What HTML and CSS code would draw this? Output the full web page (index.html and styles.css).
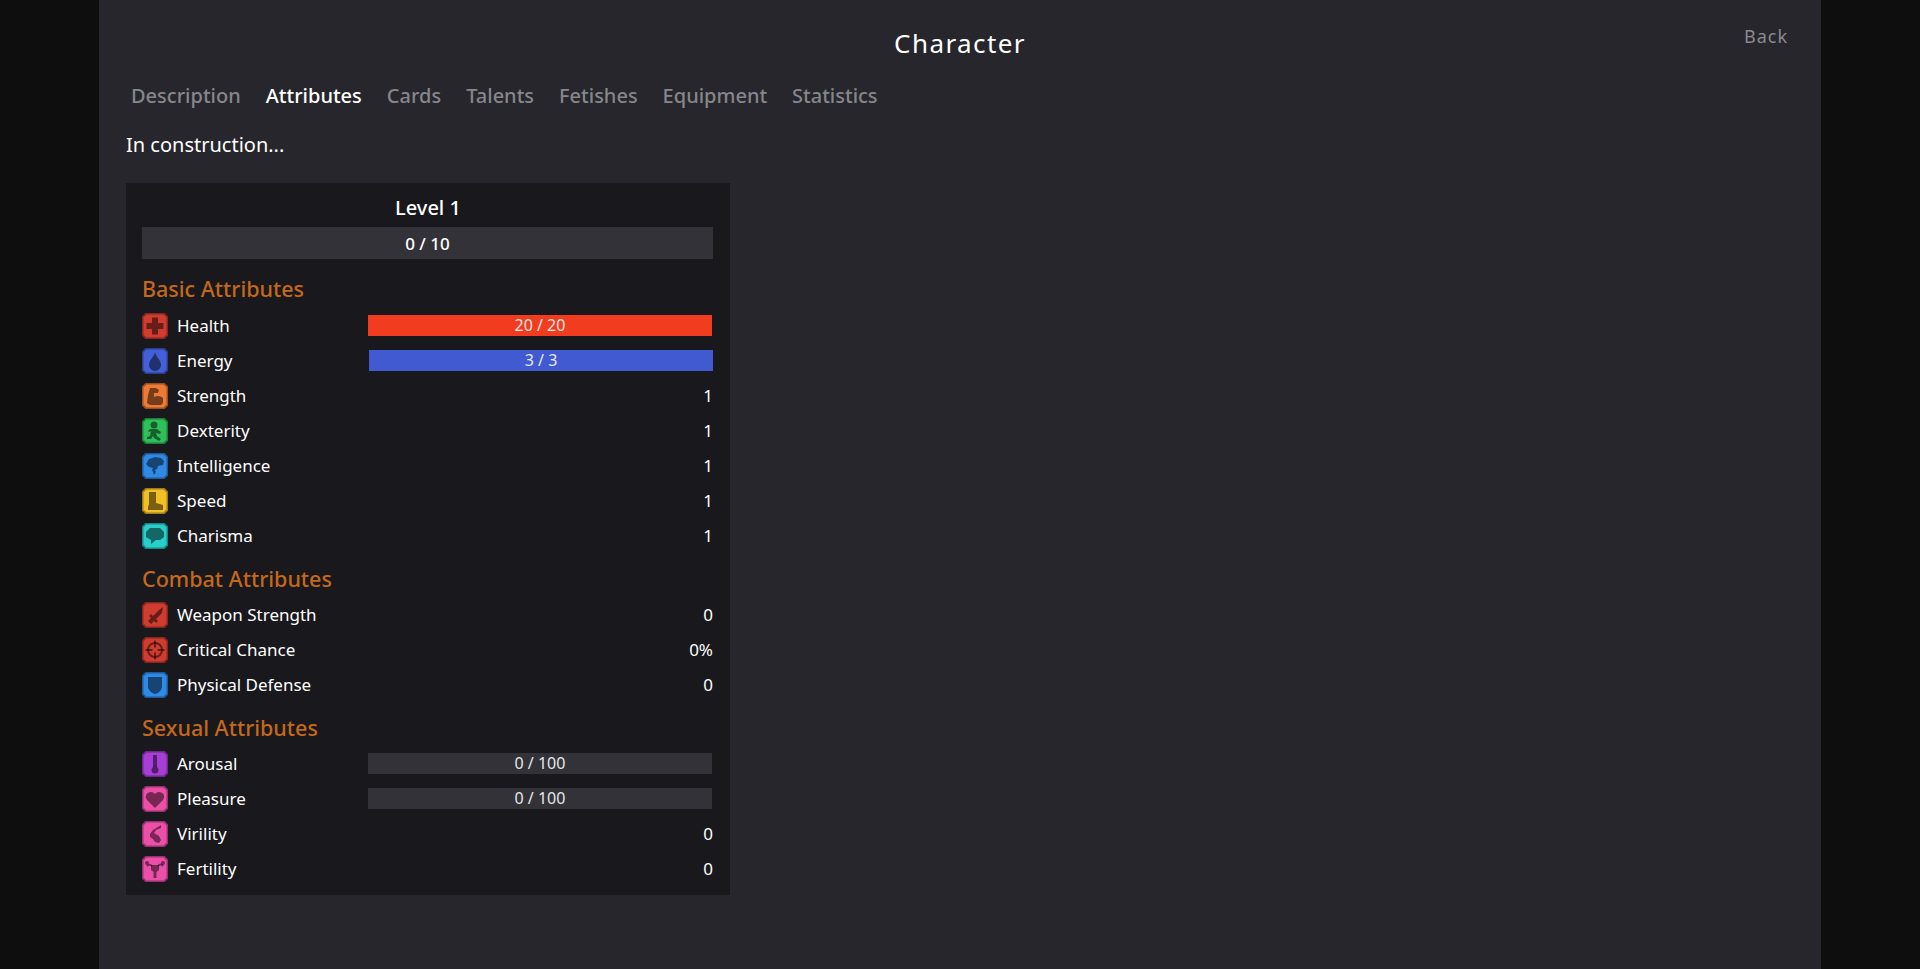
FILE: index.html
```html
<!DOCTYPE html>
<html lang="en">
<head>
    <meta charset="UTF-8">
    <meta name="viewport" content="width=device-width, initial-scale=1.0">
    <title>Character</title>
    <link rel="stylesheet" href="styles.css">
</head>
<body>

<svg class="defs" width="0" height="0">
    <symbol id="frame" viewBox="0 0 26 26">
        <path d="M3.500 0H22.500L26 3.500V22.500L22.500 26H3.500L0 22.500V3.500Z" fill="currentColor"/>
        <path d="M3.500 0H22.500L26 3.500V22.500L22.500 26H3.500L0 22.500V3.500Z" fill="#000" fill-opacity="0.35"/>
        <path d="M4.500 1.500H21.500L24.500 4.500V21.500L21.500 24.500H4.500L1.500 21.500V4.500Z" fill="currentColor"/>
    </symbol>
</svg>

<div class="panel">
    <div class="header">
        <h1 class="title">Character</h1>
        <a class="back">Back</a>
    </div>

    <div class="tabs">
        <a class="tab">Description</a>
        <a class="tab active">Attributes</a>
        <a class="tab">Cards</a>
        <a class="tab">Talents</a>
        <a class="tab">Fetishes</a>
        <a class="tab">Equipment</a>
        <a class="tab">Statistics</a>
    </div>

    <p class="note">In construction...</p>

    <div class="card">
        <div class="level">Level 1</div>
        <div class="xp-bar">0 / 10</div>

        <h3 class="section first">Basic Attributes</h3>
        <div class="row">
            <svg class="icon health" viewBox="0 0 26 26"><use href="#frame"/><path class="glyph" d="M10 4.500h6V10h5.500v6H16v5.500h-6V16H4.500v-6H10z"/></svg>
            <span class="label">Health</span>
            <div class="bar bar-health">20 / 20</div>
        </div>
        <div class="row">
            <svg class="icon energy" viewBox="0 0 26 26"><use href="#frame"/><path class="glyph" d="M13 4C14 9 19 12 19 17a6 6 0 0 1-12 0C7 12 12 9 13 4z"/></svg>
            <span class="label">Energy</span>
            <div class="bar bar-energy">3 / 3</div>
        </div>
        <div class="row">
            <svg class="icon strength" viewBox="0 0 26 26"><use href="#frame"/><path class="glyph" d="M8 5h6l3 2-1 3-4 0v4c3-2 7-1 9 1v5l-2 2H8l-3-2 1-8z"/></svg>
            <span class="label">Strength</span>
            <span class="value">1</span>
        </div>
        <div class="row">
            <svg class="icon dexterity" viewBox="0 0 26 26"><use href="#frame"/><circle class="glyph" cx="12" cy="7" r="3.500"/><path class="glyph" d="M8 11h7l4 3-1 2-4-1 1 3 4 3-2 2-5-3-1-2-2 3-4 0 0-2 3-1 1-5-2 1-1-1z"/></svg>
            <span class="label">Dexterity</span>
            <span class="value">1</span>
        </div>
        <div class="row">
            <svg class="icon intelligence" viewBox="0 0 26 26"><use href="#frame"/><path class="glyph" d="M7 6l6-2 6 1 3 3-1 4-5 1-1 3-2 1 1 2-2 3-1-3-1-2 1-2-4-1-3-3z"/></svg>
            <span class="label">Intelligence</span>
            <span class="value">1</span>
        </div>
        <div class="row">
            <svg class="icon speed" viewBox="0 0 26 26"><use href="#frame"/><path class="glyph" d="M7 4h7v11l7 2v5H6v-3l1-3z"/></svg>
            <span class="label">Speed</span>
            <span class="value">1</span>
        </div>
        <div class="row">
            <svg class="icon charisma" viewBox="0 0 26 26"><use href="#frame"/><path class="glyph" d="M8 5h10l4 4v5l-4 3h-4l-5 4v-4l-5-3V9z"/></svg>
            <span class="label">Charisma</span>
            <span class="value">1</span>
        </div>

        <h3 class="section">Combat Attributes</h3>
        <div class="row">
            <svg class="icon weapon" viewBox="0 0 26 26"><use href="#frame"/><path class="glyph" d="M21 5l-1 6-6 6 2 2-2 2-2-2-3 3-3-3 3-3-2-2 2-2 2 2 6-6z"/></svg>
            <span class="label">Weapon Strength</span>
            <span class="value">0</span>
        </div>
        <div class="row">
            <svg class="icon critical" viewBox="0 0 26 26"><use href="#frame"/><circle class="glyph-line" cx="13" cy="13" r="7"/><path class="glyph-line" d="M13 3.500v7M13 15.500v7M3.500 13h7M15.500 13h7"/></svg>
            <span class="label">Critical Chance</span>
            <span class="value">0%</span>
        </div>
        <div class="row">
            <svg class="icon defense" viewBox="0 0 26 26"><use href="#frame"/><path class="glyph" d="M6 5h14v9c0 4-3 7-7 8-4-1-7-4-7-8z"/></svg>
            <span class="label">Physical Defense</span>
            <span class="value">0</span>
        </div>

        <h3 class="section">Sexual Attributes</h3>
        <div class="row">
            <svg class="icon arousal" viewBox="0 0 26 26"><use href="#frame"/><path class="glyph" d="M11 4h4v12h-4z"/><circle class="glyph" cx="13" cy="19" r="3.500"/></svg>
            <span class="label">Arousal</span>
            <div class="bar">0 / 100</div>
        </div>
        <div class="row">
            <svg class="icon pleasure" viewBox="0 0 26 26"><use href="#frame"/><path class="glyph" d="M13 22L5 14c-3-4 0-8 4-8 2 0 3 1 4 2 1-1 2-2 4-2 4 0 7 4 4 8z"/></svg>
            <span class="label">Pleasure</span>
            <div class="bar">0 / 100</div>
        </div>
        <div class="row">
            <svg class="icon virility" viewBox="0 0 26 26"><use href="#frame"/><path class="glyph" d="M19 4v3l-5 2-2 3 5 3 2 4-2 3-4-1-2-3-3-2v-3l3-4z"/></svg>
            <span class="label">Virility</span>
            <span class="value">0</span>
        </div>
        <div class="row">
            <svg class="icon fertility" viewBox="0 0 26 26"><use href="#frame"/><path class="glyph" d="M9 9h8v5l-2.500 2v6h-3v-6L9 14z"/><path class="glyph-line" d="M10 10c-2-2-3-2-5 0M16 10c2-2 3-2 5 0"/><circle class="glyph" cx="5" cy="7" r="2"/><circle class="glyph" cx="21" cy="7" r="2"/></svg>
            <span class="label">Fertility</span>
            <span class="value">0</span>
        </div>
    </div>
</div>

</body>
</html>
```

FILE: styles.css
```css
* {
    box-sizing: border-box;
}
html, body {
    height: 100%;
}
body {
    margin: 0;
    overflow: hidden;
    background-color: #0e0e0e;
    color: #fff;
    font-family: "Noto Sans", "Open Sans", sans-serif;
}
.defs {
    display: none;
}
.panel {
    width: 1722px;
    height: 100%;
    margin-left: 99px;
    padding: 0 27px;
    background-color: #26262c;
}
.header {
    display: flex;
    justify-content: center;
    position: relative;
    height: 71px;
}
.title {
    margin: 24px 0 0;
    font-size: 26px;
    font-weight: 400;
    line-height: 38px;
    letter-spacing: 1.4px;
}
.back {
    position: absolute;
    right: 6px;
    top: 23px;
    font-size: 18px;
    line-height: 26px;
    letter-spacing: 1px;
    color: #8a8a8f;
}
.tabs {
    display: flex;
    gap: 25px;
    padding-left: 5px;
    height: 48px;
    align-items: center;
}
.tab {
    font-size: 20px;
    font-weight: 500;
    color: #86868b;
}
.tab.active {
    color: #fff;
}
.note {
    margin: 0;
    height: 64px;
    font-size: 20px;
    line-height: 52px;
}
.card {
    width: 604px;
    height: 712px;
    padding: 13px 16px 0;
    background-color: #18181d;
}
.level {
    height: 31px;
    text-align: center;
    font-size: 20px;
    font-weight: 500;
    line-height: 24px;
}
.xp-bar {
    width: 571px;
    height: 32px;
    background-color: #323238;
    text-align: center;
    font-size: 17px;
    font-weight: 500;
    line-height: 33px;
}
.section {
    margin: 0;
    height: 44px;
    font-size: 21.500px;
    font-weight: 500;
    line-height: 52px;
    color: #c4691a;
}
.section.first {
    height: 49px;
    line-height: 60px;
}
.row {
    display: flex;
    align-items: center;
    height: 35px;
    font-size: 17px;
}
.icon {
    width: 26px;
    height: 26px;
    flex: none;
    margin-right: 9px;
}
.glyph {
    fill: #000;
    fill-opacity: 0.5;
}
.glyph-line {
    fill: none;
    stroke: #000;
    stroke-opacity: 0.5;
    stroke-width: 2;
}
.label {
    width: 191px;
    flex: none;
}
.value {
    width: 345px;
    text-align: right;
}
.bar {
    width: 344px;
    height: 21px;
    background-color: #323238;
    text-align: center;
    font-size: 16px;
    line-height: 20px;
    color: #e6e6e6;
}
.bar-health {
    background-color: #f13c1f;
}
.bar-energy {
    margin-left: 1px;
    background-color: #4159d1;
}
.health { color: #d03c30; }
.energy { color: #4460d8; }
.strength { color: #ee7b35; }
.dexterity { color: #2fc05a; }
.intelligence { color: #2f8ae6; }
.speed { color: #f2c025; }
.charisma { color: #26cfc9; }
.weapon { color: #d03c30; }
.critical { color: #d03c30; }
.defense { color: #2f8ae6; }
.arousal { color: #a63fd6; }
.pleasure { color: #ec4fa8; }
.virility { color: #ec4fa8; }
.fertility { color: #ec4fa8; }
```
